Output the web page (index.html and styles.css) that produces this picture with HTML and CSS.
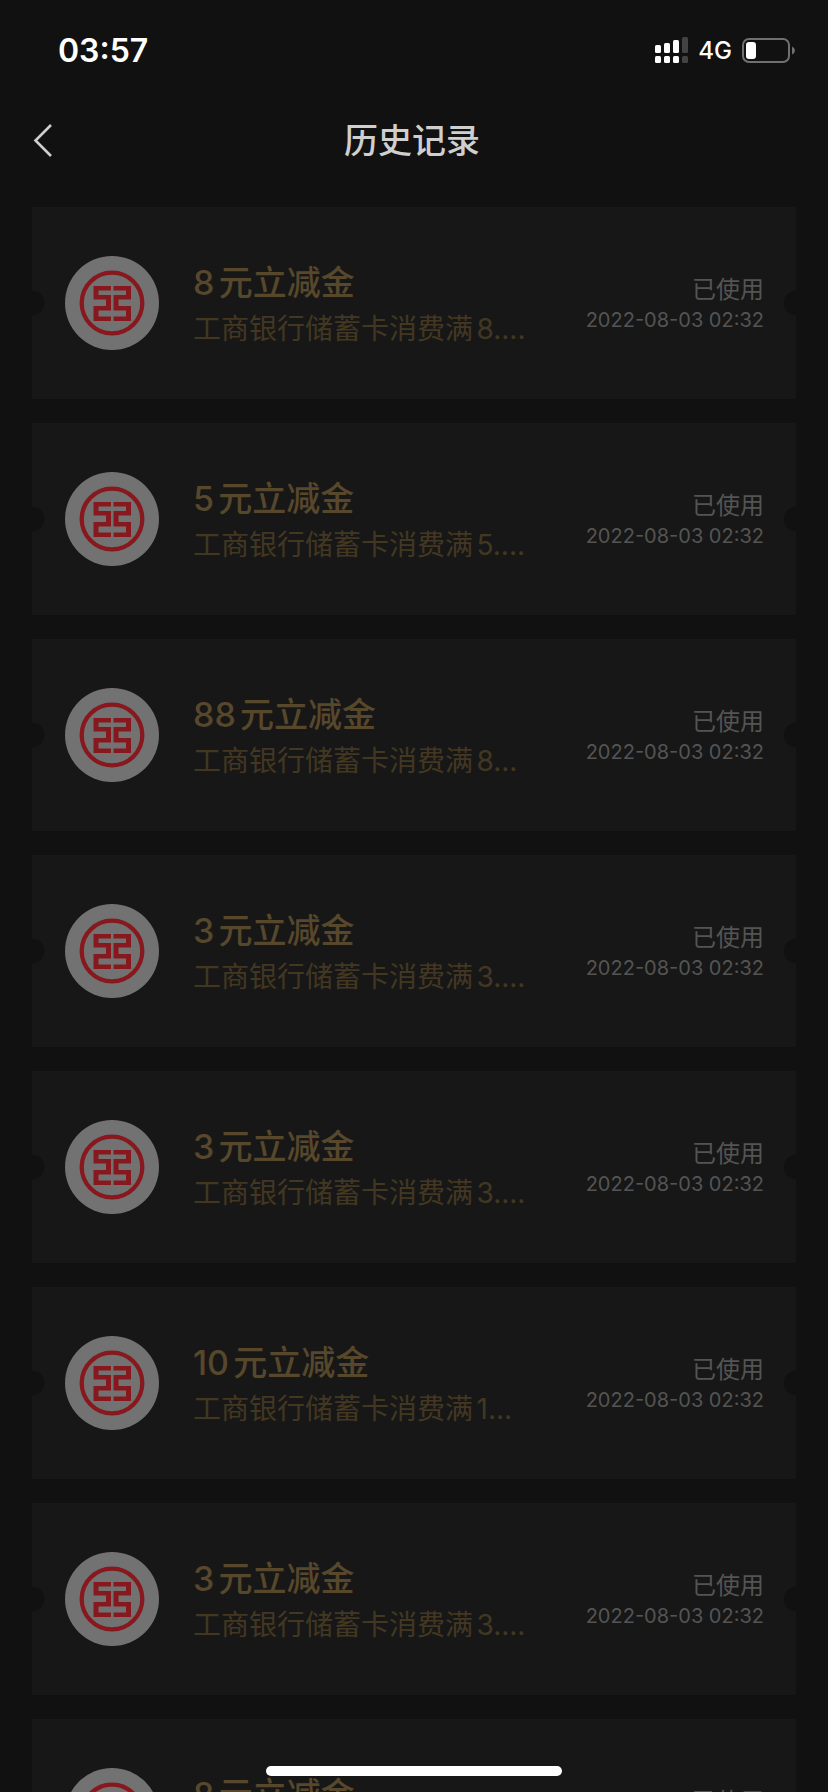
FILE: index.html
```
<!DOCTYPE html>
<html lang="zh-CN">
<head>
    <meta charset="UTF-8">
    <meta name="viewport" content="width=device-width, initial-scale=1.0">
    <title>历史记录</title>
    <link rel="stylesheet" href="styles.css">
</head>
<body>
    <div class="status-bar">
        <span class="time">03:57</span>
        <div class="status-icons">
            <svg class="signal" width="33" height="26" viewBox="0 0 33 26" fill="#fff">
                <rect x="0" y="8" width="6" height="8" rx="1.5"/>
                <rect x="9" y="6" width="6" height="10" rx="1.5"/>
                <rect x="18" y="3" width="6" height="13" rx="1.5"/>
                <rect x="27" y="0" width="6" height="16" rx="1.5" fill="#434343"/>
                <rect x="0" y="19" width="6" height="7" rx="1.5"/>
                <rect x="9" y="19" width="6" height="7" rx="1.5"/>
                <rect x="18" y="19" width="6" height="7" rx="1.5"/>
                <rect x="27" y="19" width="6" height="7" rx="1.5" fill="#434343"/>
            </svg>
            <span class="network">4G</span>
            <svg class="battery" width="53" height="25" viewBox="0 0 53 25">
                <rect x="1" y="1" width="46" height="23" rx="6" fill="none" stroke="#707070" stroke-width="2"/>
                <rect x="4" y="4" width="10" height="17" rx="3" fill="#fff"/>
                <path d="M50 8.500Q53 10 53 12.500Q53 15 50 16.500Z" fill="#707070"/>
            </svg>
        </div>
    </div>

    <header class="nav-bar">
        <button class="back" type="button" aria-label="返回">
            <svg width="20" height="34" viewBox="0 0 20 34" fill="none" stroke="#cfcfcf" stroke-width="2.600">
                <path d="M18 1L2.500 16.500L18 32"/>
            </svg>
        </button>
        <h1>历史记录</h1>
    </header>

    <main class="list" id="list"></main>

    <div class="home-indicator"></div>

    <template id="card">
        <article class="card">
            <svg class="logo" viewBox="0 0 94 94">
                <circle cx="47" cy="47" r="47" fill="#727272"/>
                <circle cx="47" cy="47" r="30.300" fill="none" stroke="#87191e" stroke-width="4.300"/>
                <path fill="#87191e" d="M28.500 30H46V34.500H33.500V39H46V54.500H33.500V60.500H46V65H28.500V50H41V43.500H28.500ZM48.500 30H66V43.500H53.500V50H66V65H48.500V60.500H61V54.500H48.500V39H61V34.500H48.500Z"/>
            </svg>
            <div class="info">
                <h2></h2>
                <p></p>
            </div>
            <div class="state">
                <span class="used">已使用</span>
                <time>2022-08-03 02:32</time>
            </div>
        </article>
    </template>

    <script>
        var coupons = [
            ['8', '8....'],
            ['5', '5....'],
            ['88', '8...'],
            ['3', '3....'],
            ['3', '3....'],
            ['10', '1...'],
            ['3', '3....'],
            ['8', '8....']
        ];
        var list = document.getElementById('list');
        var template = document.getElementById('card');

        coupons.forEach(function(coupon) {
            var card = template.content.cloneNode(true);
            card.querySelector('h2').textContent = coupon[0] + '元立减金';
            card.querySelector('p').textContent = '工商银行储蓄卡消费满' + coupon[1];
            list.appendChild(card);
        });
    </script>
</body>
</html>
```
FILE: styles.css
```
* {
    box-sizing: border-box;
}
body {
    margin: 0;
    height: 100vh;
    overflow: hidden;
    font-family: Inter, "Noto Sans CJK SC", sans-serif;
    background-color: #111;
    color: #cfcfcf;
    text-autospace: normal;
}
h1, h2, p {
    margin: 0;
}
.status-bar {
    display: flex;
    justify-content: space-between;
    align-items: center;
    height: 100px;
    padding: 0 33px 0 58px;
    color: #fff;
}
.time {
    font-size: 32px;
    font-weight: 600;
}
.status-icons {
    display: flex;
    align-items: center;
    gap: 10px;
}
.network {
    font-size: 24px;
    font-weight: 500;
}
.nav-bar {
    display: grid;
    grid-template-columns: 64px 1fr 64px;
    align-items: center;
    height: 82px;
    padding: 0 4px 0 0;
}
.nav-bar h1 {
    font-size: 34px;
    line-height: 48px;
    font-weight: 500;
    text-align: center;
}
.back {
    display: flex;
    padding: 0 0 0 33px;
    border: none;
    background: none;
    cursor: pointer;
}
.list {
    display: flex;
    flex-direction: column;
    gap: 24px;
    padding: 25px 32px;
}
.card {
    display: flex;
    align-items: center;
    flex-shrink: 0;
    height: 192px;
    padding: 0 32px 0 33px;
    background:
        radial-gradient(circle at 0 50%, #111 12px, transparent 13px),
        radial-gradient(circle at 100% 50%, #111 12px, transparent 13px),
        #171717;
}
.logo {
    width: 94px;
    height: 94px;
    flex-shrink: 0;
}
.info {
    flex: 1;
    min-width: 0;
    margin-left: 34px;
    padding-top: 4px;
}
.info h2 {
    font-size: 34px;
    line-height: 48px;
    font-weight: 500;
    color: #57472b;
}
.info p {
    font-size: 28px;
    line-height: 44px;
    white-space: nowrap;
    color: #433722;
}
.state {
    display: flex;
    flex-direction: column;
    align-items: flex-end;
    padding-top: 2px;
    color: #545454;
}
.used {
    font-size: 24px;
    line-height: 32px;
}
.state time {
    font-size: 20px;
    line-height: 28px;
}
.home-indicator {
    position: fixed;
    bottom: 16px;
    left: 50%;
    width: 296px;
    height: 10px;
    border-radius: 5px;
    background-color: #fff;
    transform: translateX(-50%);
}
```
